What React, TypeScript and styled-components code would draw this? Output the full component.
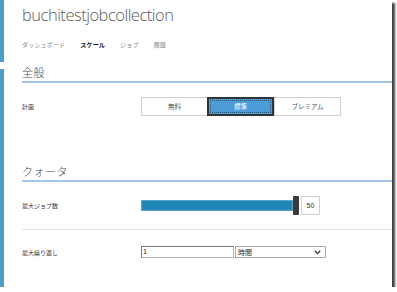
import React from 'react';
import styled, { createGlobalStyle } from 'styled-components';

const GlobalStyle = createGlobalStyle`
  html, body {
    margin: 0;
    padding: 0;
    background: #ffffff;
  }

  body {
    font-family: 'Noto Sans CJK JP', 'Noto Sans', sans-serif;
    color: #333;
  }
`;

const StyledFrame = styled.div`
  width: 392px;
  height: 287px;
  display: flex;
  background: #ffffff;
  box-shadow: 3px 3px 2px rgba(0, 0, 0, 0.75);
  overflow: hidden;
`;

const StyledStrip = styled.div`
  width: 4px;
  display: flex;
  flex-direction: column;
  gap: 7px;

  span {
    display: block;
    background: #4aa0c8;
  }

  span:first-child {
    height: 62px;
  }

  span:last-child {
    flex: 1;
  }
`;

const StyledMain = styled.div`
  flex: 1;
  padding-left: 18px;
  display: flex;
  flex-direction: column;
`;

const StyledTitle = styled.h1`
  margin: 0;
  height: 34px;
  padding-top: 4px;
  box-sizing: border-box;
  font-family: 'Open Sans', 'Liberation Sans', sans-serif;
  font-weight: 300;
  font-size: 16.5px;
  line-height: 22px;
  color: #5c5c5c;
  letter-spacing: -0.5px;
`;

const StyledNav = styled.nav`
  display: flex;
  align-items: center;
  height: 20px;
  gap: 15px;
`;

const StyledTab = styled.span<{ $active?: boolean }>`
  font-size: 6.2px;
  color: ${(p) => (p.$active ? '#222' : '#8a8a8a')};
  font-weight: ${(p) => (p.$active ? 700 : 400)};
`;

const StyledSectionHead = styled.div<{ $top: number }>`
  margin-top: ${(p) => p.$top}px;
  height: 19px;
  display: flex;
  align-items: center;
  border-bottom: 2px solid #a3c7eb;
  font-size: 11px;
  font-weight: 300;
  color: #4a4a4a;
  letter-spacing: 0.5px;
`;

const StyledRow = styled.div<{ $height: number; $top?: number }>`
  display: flex;
  align-items: center;
  height: ${(p) => p.$height}px;
  margin-top: ${(p) => p.$top ?? 0}px;
`;

const StyledLabel = styled.span`
  width: 119px;
  flex: none;
  font-size: 6px;
  color: #333;
`;

const StyledSegments = styled.div`
  display: flex;
`;

const StyledSegment = styled.div<{ $selected?: boolean }>`
  width: 67px;
  height: 19px;
  box-sizing: border-box;
  display: flex;
  align-items: center;
  justify-content: center;
  font-size: 6.5px;
  position: relative;
  background: ${(p) => (p.$selected ? '#4c9cd8' : '#ffffff')};
  color: ${(p) => (p.$selected ? '#ffffff' : '#555')};
  border: ${(p) => (p.$selected ? '2px solid #333' : '1px solid #cfcfcf')};
  margin-left: ${(p) => (p.$selected ? '-1px' : '0')};

  &::after {
    content: '';
    display: ${(p) => (p.$selected ? 'block' : 'none')};
    position: absolute;
    inset: 1px;
    border: 1px dotted rgba(0, 0, 0, 0.45);
  }
`;

const StyledSlider = styled.div`
  display: flex;
  align-items: center;
`;

const StyledTrack = styled.div`
  width: 152px;
  height: 11px;
  box-sizing: border-box;
  background: #2086b8;
  border: 1px solid #5aa7cf;
`;

const StyledThumb = styled.div`
  width: 6px;
  height: 19px;
  background: #3a3a3a;
  border-radius: 1px;
`;

const StyledValue = styled.div`
  margin-left: 2px;
  width: 19px;
  height: 19px;
  box-sizing: border-box;
  border: 1px solid #cfcfcf;
  display: flex;
  align-items: center;
  justify-content: center;
  font-family: 'Liberation Sans', sans-serif;
  font-size: 7px;
  color: #333;
`;

const StyledDivider = styled.div`
  margin-top: 14px;
  height: 1px;
  background: #e3e3e3;
`;

const StyledInput = styled.div`
  width: 93px;
  height: 12px;
  box-sizing: border-box;
  border: 1px solid #b5b5b5;
  border-top-color: #777;
  border-left-color: #777;
  font-family: 'Liberation Sans', sans-serif;
  font-size: 7px;
  line-height: 10px;
  padding-left: 1px;
  color: #222;
`;

const StyledSelect = styled.div`
  margin-left: 1px;
  width: 91px;
  height: 12px;
  box-sizing: border-box;
  border: 1px solid #a8a8a8;
  display: flex;
  align-items: center;
  justify-content: space-between;
  padding: 0 4px 0 2px;
  font-size: 7px;
  color: #222;

  svg {
    width: 7px;
    height: 5px;
  }
`;

const App: React.FunctionComponent = () => {
  return (
    <>
      <GlobalStyle />
      <StyledFrame>
        <StyledStrip>
          <span />
          <span />
        </StyledStrip>
        <StyledMain>
          <StyledTitle>buchitestjobcollection</StyledTitle>
          <StyledNav>
            <StyledTab>ダッシュボード</StyledTab>
            <StyledTab $active>スケール</StyledTab>
            <StyledTab>ジョブ</StyledTab>
            <StyledTab>履歴</StyledTab>
          </StyledNav>

          <StyledSectionHead $top={8}>全般</StyledSectionHead>
          <StyledRow $height={20} $top={13}>
            <StyledLabel>計画</StyledLabel>
            <StyledSegments>
              <StyledSegment>無料</StyledSegment>
              <StyledSegment $selected>標準</StyledSegment>
              <StyledSegment>プレミアム</StyledSegment>
            </StyledSegments>
          </StyledRow>

          <StyledSectionHead $top={45}>クォータ</StyledSectionHead>
          <StyledRow $height={20} $top={13}>
            <StyledLabel>最大ジョブ数</StyledLabel>
            <StyledSlider>
              <StyledTrack />
              <StyledThumb />
              <StyledValue>50</StyledValue>
            </StyledSlider>
          </StyledRow>
          <StyledDivider />

          <StyledRow $height={14} $top={15}>
            <StyledLabel>最大繰り返し</StyledLabel>
            <StyledInput>1</StyledInput>
            <StyledSelect>
              <span>時間</span>
              <svg viewBox="0 0 7 5" fill="none">
                <path d="M0.8 0.8 L3.5 3.6 L6.2 0.8" stroke="#333" strokeWidth="1.3" />
              </svg>
            </StyledSelect>
          </StyledRow>
        </StyledMain>
      </StyledFrame>
    </>
  );
};

export default App;
